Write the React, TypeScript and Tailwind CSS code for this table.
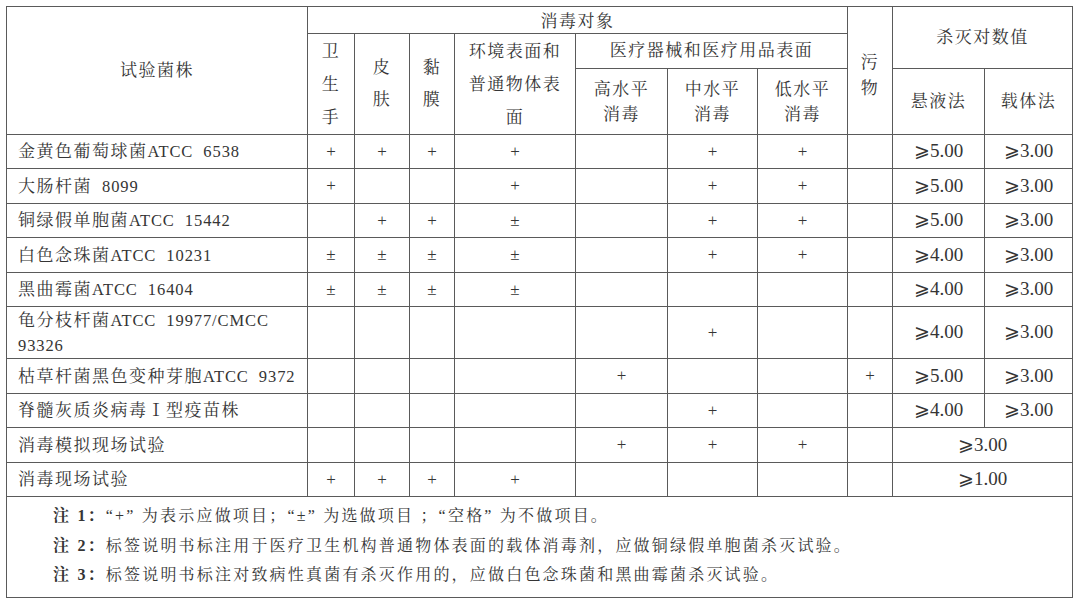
const cjk = "font-['Liberation_Serif','Noto_Serif_CJK_SC','Noto_Sans_CJK_SC',serif]";
const num = "font-['Liberation_Serif','DejaVu_Serif','Noto_Sans_CJK_SC',serif]";

type Row = {
    name: string[];
    marks: string[];
    susp: string;
    carrier?: string;
    h: string;
};

const rows: Row[] = [
    { name: ['金黄色葡萄球菌ATCC 6538'], marks: ['+', '+', '+', '+', '', '+', '+', ''], susp: '⩾5.00', carrier: '⩾3.00', h: 'h-[34px]' },
    { name: ['大肠杆菌 8099'], marks: ['+', '', '', '+', '', '+', '+', ''], susp: '⩾5.00', carrier: '⩾3.00', h: 'h-[35px]' },
    { name: ['铜绿假单胞菌ATCC 15442'], marks: ['', '+', '+', '±', '', '+', '+', ''], susp: '⩾5.00', carrier: '⩾3.00', h: 'h-[34px]' },
    { name: ['白色念珠菌ATCC 10231'], marks: ['±', '±', '±', '±', '', '+', '+', ''], susp: '⩾4.00', carrier: '⩾3.00', h: 'h-[35px]' },
    { name: ['黑曲霉菌ATCC 16404'], marks: ['±', '±', '±', '±', '', '', '', ''], susp: '⩾4.00', carrier: '⩾3.00', h: 'h-[34px]' },
    { name: ['龟分枝杆菌ATCC 19977/CMCC', '93326'], marks: ['', '', '', '', '', '+', '', ''], susp: '⩾4.00', carrier: '⩾3.00', h: 'h-[52px]' },
    { name: ['枯草杆菌黑色变种芽胞ATCC 9372'], marks: ['', '', '', '', '+', '', '', '+'], susp: '⩾5.00', carrier: '⩾3.00', h: 'h-[35px]' },
    { name: ['脊髓灰质炎病毒Ⅰ型疫苗株'], marks: ['', '', '', '', '', '+', '', ''], susp: '⩾4.00', carrier: '⩾3.00', h: 'h-[34px]' },
    { name: ['消毒模拟现场试验'], marks: ['', '', '', '', '+', '+', '+', ''], susp: '⩾3.00', h: 'h-[35px]' },
    { name: ['消毒现场试验'], marks: ['+', '+', '+', '+', '', '', '', ''], susp: '⩾1.00', h: 'h-[34px]' },
];

const cell = 'border border-[#5a5a5a] p-0 align-middle text-center';

// latin runs get a narrower look than the CJK glyphs around them
function Name({ text }: { text: string }) {
    const parts = text.split(/([A-Za-z0-9/ ]+)/);
    return (
        <>
            {parts.map((p, i) =>
                i % 2 === 1 ? (
                    <span key={i} className="text-[16.5px] tracking-[0.9px]">
                        {p.replace(/ /g, '\u00a0\u00a0')}
                    </span>
                ) : (
                    <span key={i}>{p}</span>
                ),
            )}
        </>
    );
}

export default function App() {
    return (
        <div className={`w-[1080px] h-[603px] bg-white pt-[6px] pl-[6px] text-[#353535] ${cjk}`}>
            <table className="table-fixed border-collapse w-[1067px] text-[17px] tracking-[1.5px]">
                <colgroup>
                    <col className="w-[301px]" />
                    <col className="w-[47px]" />
                    <col className="w-[55px]" />
                    <col className="w-[45px]" />
                    <col className="w-[121px]" />
                    <col className="w-[92px]" />
                    <col className="w-[90px]" />
                    <col className="w-[90px]" />
                    <col className="w-[45px]" />
                    <col className="w-[92px]" />
                    <col className="w-[88px]" />
                </colgroup>
                <thead>
                    <tr className="h-[27px]">
                        <th rowSpan={3} className={`${cell} font-normal`}>试验菌株</th>
                        <th colSpan={7} className={`${cell} font-normal leading-[20px] pt-[4px]`}>消毒对象</th>
                        <th rowSpan={3} className={`${cell} font-normal leading-[26px] pt-[10px]`}>
                            污<br />物
                        </th>
                        <th colSpan={2} rowSpan={2} className={`${cell} font-normal`}>杀灭对数值</th>
                    </tr>
                    <tr className="h-[35px]">
                        <th rowSpan={2} className={`${cell} font-normal leading-[33px]`}>
                            卫<br />生<br />手
                        </th>
                        <th rowSpan={2} className={`${cell} font-normal leading-[32px]`}>
                            皮<br />肤
                        </th>
                        <th rowSpan={2} className={`${cell} font-normal leading-[32px]`}>
                            黏<br />膜
                        </th>
                        <th rowSpan={2} className={`${cell} font-normal leading-[33px]`}>
                            环境表面和<br />普通物体表<br />面
                        </th>
                        <th colSpan={3} className={`${cell} font-normal`}>医疗器械和医疗用品表面</th>
                    </tr>
                    <tr className="h-[66px]">
                        <th className={`${cell} font-normal leading-[25px]`}>
                            高水平<br />消毒
                        </th>
                        <th className={`${cell} font-normal leading-[25px]`}>
                            中水平<br />消毒
                        </th>
                        <th className={`${cell} font-normal leading-[25px]`}>
                            低水平<br />消毒
                        </th>
                        <th className={`${cell} font-normal`}>悬液法</th>
                        <th className={`${cell} font-normal`}>载体法</th>
                    </tr>
                </thead>
                <tbody>
                    {rows.map((r, i) => (
                        <tr key={i} className={r.h}>
                            <td className={`${cell} text-left pl-[11px] leading-[25px] whitespace-nowrap`}>
                                {r.name.map((line, k) => (
                                    <div key={k}>
                                        <Name text={line} />
                                    </div>
                                ))}
                            </td>
                            {r.marks.map((m, j) => (
                                <td key={j} className={`${cell} ${num} text-[17px] tracking-normal`}>
                                    {m}
                                </td>
                            ))}
                            {r.carrier ? (
                                <>
                                    <td className={`${cell} ${num} text-[19px] tracking-normal`}>{r.susp}</td>
                                    <td className={`${cell} ${num} text-[19px] tracking-normal`}>{r.carrier}</td>
                                </>
                            ) : (
                                <td colSpan={2} className={`${cell} ${num} text-[19px] tracking-normal`}>
                                    {r.susp}
                                </td>
                            )}
                        </tr>
                    ))}
                    <tr className="h-[101px]">
                        <td colSpan={11} className="border border-[#5a5a5a] p-0 pl-[46px] pt-[4px] align-top text-left text-[16px] tracking-[2.2px] leading-[29.5px]">
                            <div>
                                <span className="font-bold">注 1：</span>“+” 为表示应做项目；“±” 为选做项目 ；“空格” 为不做项目。
                            </div>
                            <div>
                                <span className="font-bold">注 2：</span>标签说明书标注用于医疗卫生机构普通物体表面的载体消毒剂，应做铜绿假单胞菌杀灭试验。
                            </div>
                            <div>
                                <span className="font-bold">注 3：</span>标签说明书标注对致病性真菌有杀灭作用的，应做白色念珠菌和黑曲霉菌杀灭试验。
                            </div>
                        </td>
                    </tr>
                </tbody>
            </table>
        </div>
    );
}
